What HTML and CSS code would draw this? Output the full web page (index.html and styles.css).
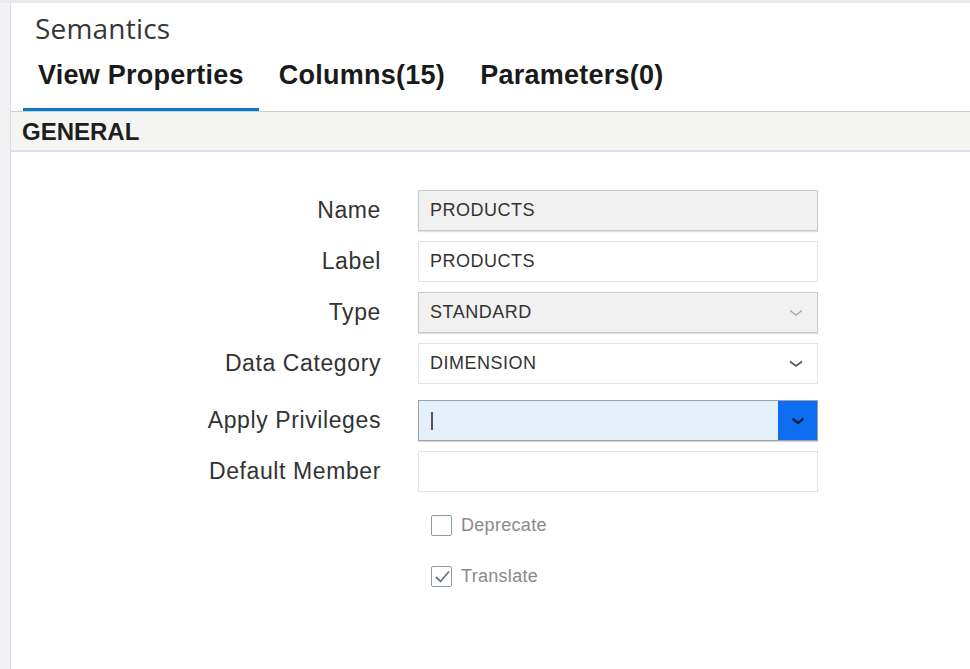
FILE: index.html
```html
<!DOCTYPE html>
<html lang="en">
<head>
<meta charset="utf-8">
<title>Semantics</title>
<link rel="stylesheet" href="styles.css">
</head>
<body>
<div class="app">
  <div class="rail"></div>
  <main class="panel">
    <h1 class="title">Semantics</h1>
    <nav class="tabs">
      <div class="tab active">View Properties</div>
      <div class="tab">Columns(15)</div>
      <div class="tab">Parameters(0)</div>
    </nav>
    <div class="section-head">GENERAL</div>
    <form class="form">
      <div class="row">
        <span class="lbl">Name</span>
        <div class="field readonly">PRODUCTS</div>
      </div>
      <div class="row">
        <span class="lbl">Label</span>
        <div class="field">PRODUCTS</div>
      </div>
      <div class="row">
        <span class="lbl">Type</span>
        <div class="field readonly select">
          <span class="val">STANDARD</span>
          <span class="chev light"><svg width="14" height="8" viewBox="0 0 14 8"><path d="M1 1.5 L7 6 L13 1.5" fill="none" stroke="currentColor" stroke-width="1.4"/></svg></span>
        </div>
      </div>
      <div class="row">
        <span class="lbl">Data Category</span>
        <div class="field select">
          <span class="val">DIMENSION</span>
          <span class="chev"><svg width="14" height="8" viewBox="0 0 14 8"><path d="M1 1.5 L7 6 L13 1.5" fill="none" stroke="currentColor" stroke-width="1.6"/></svg></span>
        </div>
      </div>
      <div class="row spaced">
        <span class="lbl">Apply Privileges</span>
        <div class="field focus select">
          <span class="caret"></span>
          <span class="btn"><svg width="14" height="8" viewBox="0 0 14 8"><path d="M1.5 1.5 L7 6 L12.5 1.5" fill="none" stroke="currentColor" stroke-width="2.2"/></svg></span>
        </div>
      </div>
      <div class="row">
        <span class="lbl">Default Member</span>
        <div class="field"></div>
      </div>
      <div class="checks">
        <div class="check"><span class="box"></span><span>Deprecate</span></div>
        <div class="check"><span class="box"><svg width="18" height="18" viewBox="0 0 18 18"><path d="M3 9 L7.5 13.5 L16 3.5" fill="none" stroke="#6b7681" stroke-width="1.8"/></svg></span><span>Translate</span></div>
      </div>
    </form>
  </main>
</div>
</body>
</html>
```

FILE: styles.css
```css
* { box-sizing: border-box; }
html, body { margin: 0; padding: 0; }
body {
  width: 970px;
  height: 669px;
  overflow: hidden;
  background: #ffffff;
  font-family: Arial, "Liberation Sans", Helvetica, sans-serif;
  color: #333;
}
.app {
  display: flex;
  height: 669px;
  border-top: 3px solid #e8e9ef;
}
.rail {
  width: 11px;
  flex: none;
  background: #f2f2f5;
  border-right: 1px solid #dcdde3;
}
.panel {
  flex: 1;
  display: flex;
  flex-direction: column;
  background: #fff;
}
.title {
  margin: 0;
  padding: 7px 0 0 24px;
  font-family: "Open Sans", "Noto Sans", sans-serif;
  font-weight: 400;
  font-size: 28px;
  letter-spacing: 0.2px;
  line-height: 36px;
  color: #363636;
}
.tabs {
  display: flex;
  gap: 5px;
  padding-left: 12px;
  border-bottom: 1px solid #cbcbcb;
}
.tab {
  padding: 14px 15px 18px;
  font-size: 27px;
  letter-spacing: 0.25px;
  line-height: 30px;
  font-weight: 700;
  color: #1a1a1a;
  border-bottom: 3px solid transparent;
}
.tab.active {
  border-bottom-color: #0b79c8;
}
.section-head {
  height: 40px;
  padding-left: 11px;
  background: #f4f5f3;
  border-bottom: 2px solid #d6dfea;
  font-size: 24px;
  font-weight: 700;
  line-height: 40px;
  color: #1e1e1e;
}
.form {
  display: flex;
  flex-direction: column;
  gap: 10px;
  padding-top: 38px;
}
.row {
  display: grid;
  grid-template-columns: 370px 400px;
  column-gap: 37px;
  height: 41px;
}
.row.spaced { margin-top: 6px; }
.lbl {
  display: flex;
  align-items: center;
  justify-content: flex-end;
  font-size: 23px;
  letter-spacing: 0.6px;
  color: #333;
}
.field {
  display: flex;
  align-items: center;
  padding-left: 11px;
  background: #fff;
  border: 1px solid #e3e3e3;
  font-size: 18px;
  letter-spacing: 0.5px;
  color: #333;
}
.field.readonly {
  background: #f1f1f1;
  border-color: #c9c9c9;
  box-shadow: 0 1px 1px rgba(0,0,0,0.12);
}
.field.select { justify-content: space-between; }
.chev {
  display: flex;
  padding-right: 14px;
  color: #555;
}
.chev.light { color: #a8a8a8; }
.field.focus {
  background: #e3eff9;
  border-color: #9aa2aa;
  box-shadow: 0 1px 1px rgba(0,0,0,0.15);
  padding-left: 12px;
}
.caret {
  width: 2px;
  height: 18px;
  background: #555;
}
.btn {
  align-self: stretch;
  width: 39px;
  display: flex;
  align-items: center;
  justify-content: center;
  background: #0f6df3;
  color: #0d1a2c;
}
.checks {
  display: flex;
  flex-direction: column;
  gap: 30px;
  margin-top: 13px;
  padding-left: 420px;
}
.check {
  display: flex;
  align-items: center;
  gap: 9px;
  font-size: 18px;
  letter-spacing: 0.3px;
  color: #8a8a8a;
  height: 21px;
}
.box {
  width: 21px;
  height: 21px;
  border: 1.5px solid #8f99a3;
  border-radius: 2px;
  display: flex;
  align-items: center;
  justify-content: center;
}
```
